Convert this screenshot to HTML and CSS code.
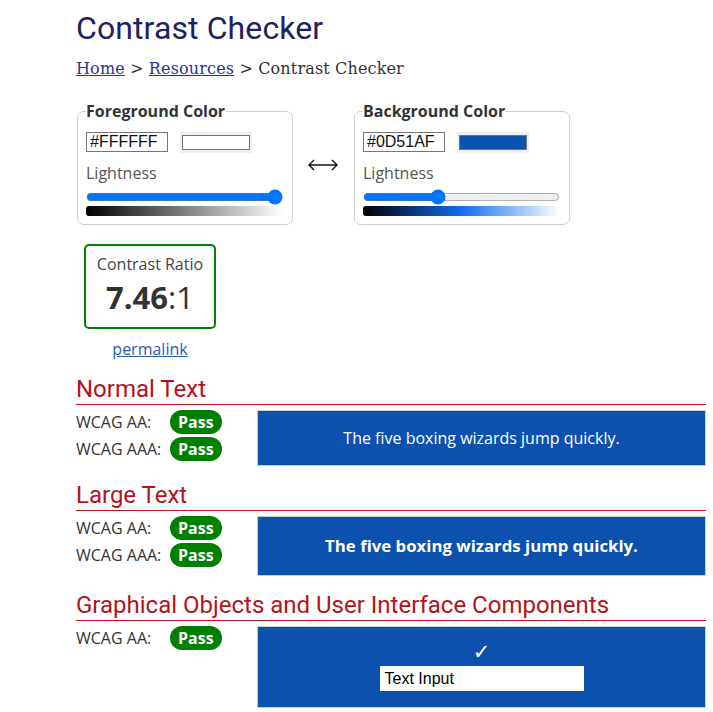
FILE: index.html
```html
<!DOCTYPE html>
<html lang="en">
<head>
<meta charset="utf-8">
<title>Contrast Checker</title>
<link rel="stylesheet" href="styles.css">
</head>
<body>
<div class="page">
  <h1 class="title">Contrast Checker</h1>
  <div class="crumbs"><a href="#">Home</a> &gt; <a href="#">Resources</a> &gt; Contrast Checker</div>

  <div class="pickers">
    <fieldset class="picker">
      <legend>Foreground Color</legend>
      <div class="hexrow">
        <input class="hex" type="text" value="#FFFFFF">
        <div class="swatch"><span class="swatch-fill fg"></span></div>
      </div>
      <div class="light-label">Lightness</div>
      <input class="slider" type="range" min="0" max="100" value="100">
      <div class="grad grad-fg"></div>
    </fieldset>
    <div class="swap">
      <svg width="30" height="12" viewBox="0 0 30 12"><path d="M1 6H29M6 1L1 6L6 11M24 1L29 6L24 11" fill="none" stroke="#111" stroke-width="1.4"/></svg>
    </div>
    <fieldset class="picker">
      <legend>Background Color</legend>
      <div class="hexrow">
        <input class="hex" type="text" value="#0D51AF">
        <div class="swatch"><span class="swatch-fill bg"></span></div>
      </div>
      <div class="light-label">Lightness</div>
      <input class="slider" type="range" min="0" max="100" value="37">
      <div class="grad grad-bg"></div>
    </fieldset>
  </div>

  <div class="ratio-wrap">
    <div class="ratio">
      <div class="ratio-label">Contrast Ratio</div>
      <div class="ratio-value"><b>7.46</b>:1</div>
    </div>
    <a class="permalink" href="#">permalink</a>
  </div>

  <section class="sec">
    <h2>Normal Text</h2>
    <div class="sec-body">
      <div class="results">
        <div class="res"><span class="lbl">WCAG AA:</span><span class="pass">Pass</span></div>
        <div class="res"><span class="lbl">WCAG AAA:</span><span class="pass">Pass</span></div>
      </div>
      <div class="sample sample-normal">The five boxing wizards jump quickly.</div>
    </div>
  </section>

  <section class="sec">
    <h2>Large Text</h2>
    <div class="sec-body">
      <div class="results">
        <div class="res"><span class="lbl">WCAG AA:</span><span class="pass">Pass</span></div>
        <div class="res"><span class="lbl">WCAG AAA:</span><span class="pass">Pass</span></div>
      </div>
      <div class="sample sample-large">The five boxing wizards jump quickly.</div>
    </div>
  </section>

  <section class="sec">
    <h2>Graphical Objects and User Interface Components</h2>
    <div class="sec-body">
      <div class="results">
        <div class="res"><span class="lbl">WCAG AA:</span><span class="pass">Pass</span></div>
      </div>
      <div class="sample sample-ui">
        <span class="check">✓</span>
        <div class="text-input">Text Input</div>
      </div>
    </div>
  </section>
</div>
</body>
</html>
```
FILE: styles.css
```css
html, body {
  margin: 0;
  padding: 0;
  background: #fff;
}
body {
  font-family: "Open Sans", sans-serif;
  font-size: 16px;
  color: #333;
}
.page {
  padding: 9px 0 0 76px;
  width: 630px;
}
.title {
  margin: 0;
  font-family: Roboto, sans-serif;
  font-weight: 400;
  font-size: 32px;
  line-height: normal;
  color: #1f215e;
  letter-spacing: 0.1px;
}
.crumbs {
  margin-top: 12px;
  font-family: "DejaVu Serif", serif;
  font-size: 16px;
  color: #333;
  letter-spacing: 0.15px;
}
.crumbs a {
  color: #263590;
}
.pickers {
  margin-top: 22px;
  display: flex;
  align-items: center;
}
.picker {
  margin: 0 0 0 1px;
  padding: 10px 9px 8px 8px;
  border: 1px solid #cfcfcf;
  border-radius: 7px;
  width: 197px;
  min-inline-size: 0;
}
.picker legend {
  padding: 0 1px 0 0;
  font-weight: 700;
  font-size: 16px;
  color: #333;
  line-height: normal;
}
.hexrow {
  display: flex;
  gap: 12px;
  align-items: flex-start;
}
.hex {
  box-sizing: border-box;
  width: 82px;
  height: 20px;
  margin: 0;
  padding: 0 0 0 3px;
  border: 1px solid #767676;
  border-radius: 0;
  font-family: "Liberation Sans", Arial, sans-serif;
  font-size: 16px;
  color: #111;
  background: #fff;
  outline: none;
}
.swatch {
  box-sizing: border-box;
  width: 72px;
  height: 21px;
  padding: 3px 2px 3px 2px;
  background: #efefef;
  display: flex;
}
.swatch-fill {
  flex: 1;
  border: 1px solid #767676;
}
.swatch-fill.fg { background: #fff; }
.swatch-fill.bg { background: #0d51af; }
.light-label {
  margin-top: 9px;
  color: #555;
  line-height: normal;
}
.slider {
  display: block;
  width: 197px;
  margin: 5px 0 1px 0;
}
.grad {
  height: 10px;
  width: 197px;
  border-radius: 3px 0 0 3px;
}
.grad-fg {
  background: linear-gradient(to right, #000, #fff);
}
.grad-bg {
  background: linear-gradient(to right, hsl(215, 86%, 0%), hsl(215, 86%, 50%), hsl(215, 86%, 100%));
}
.swap {
  width: 60px;
  display: flex;
  justify-content: center;
  padding-top: 4px;
}
.ratio-wrap {
  margin: 19px 0 0 8px;
  width: 132px;
  text-align: center;
}
.ratio {
  border: 2px solid #008000;
  border-radius: 5px;
  padding: 7px 0 9px;
}
.ratio-label {
  color: #444;
  line-height: normal;
}
.ratio-value {
  margin-top: 1px;
  font-size: 31px;
  line-height: normal;
  color: #333;
}
.ratio-value b {
  font-weight: 700;
}
.permalink {
  display: inline-block;
  margin-top: 9px;
  color: #2b5caa;
}
.sec {
  margin-top: 15px;
}
.sec h2 {
  margin: 0;
  padding-bottom: 1px;
  border-bottom: 1px solid #c0141e;
  font-family: Roboto, sans-serif;
  font-weight: 400;
  font-size: 24px;
  line-height: normal;
  color: #b3141c;
}
.sec-body {
  margin-top: 5px;
  display: flex;
  align-items: flex-start;
}
.results {
  width: 181px;
  flex: none;
  display: flex;
  flex-direction: column;
  gap: 3px;
}
.res {
  display: flex;
  align-items: center;
}
.lbl {
  width: 94px;
  color: #333;
}
.pass {
  height: 24px;
  padding: 0 8px;
  border-radius: 12px;
  background: #008000;
  color: #fff;
  font-weight: 700;
  line-height: 24px;
}
.sample {
  flex: 1;
  box-sizing: border-box;
  border: 1px solid #cccccc;
  background: #0d51af;
  color: #fff;
  text-align: center;
}
.sample-normal {
  padding: 16px 0;
  line-height: normal;
}
.sample-large {
  padding: 16px 0;
  font-weight: 700;
  font-size: 16.8px;
  line-height: 26px;
}
.sample-ui {
  display: flex;
  flex-direction: column;
  align-items: center;
  padding: 14px 0 16px;
}
.check {
  font-family: "DejaVu Sans", sans-serif;
  font-size: 21px;
  line-height: 23px;
  color: #fff;
}
.text-input {
  box-sizing: border-box;
  margin-top: 2px;
  width: 204px;
  height: 25px;
  padding: 0 5px;
  background: #fff;
  color: #000;
  text-align: left;
  font-family: "Liberation Sans", Arial, sans-serif;
  font-size: 16px;
  line-height: 25px;
}
```
